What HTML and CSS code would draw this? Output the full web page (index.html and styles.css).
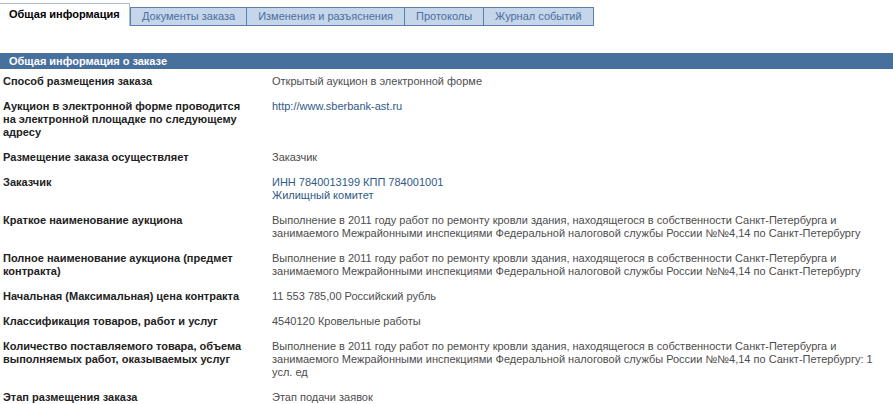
FILE: index.html
```html
<!DOCTYPE html>
<html lang="ru">
<head>
<meta charset="utf-8">
<title>Общая информация</title>
<link rel="stylesheet" href="styles.css">
</head>
<body>
<div class="tabs">
  <div class="tab tab-active">Общая информация</div>
  <div class="tab">Документы заказа</div>
  <div class="tab">Изменения и разъяснения</div>
  <div class="tab">Протоколы</div>
  <div class="tab">Журнал событий</div>
</div>

<div class="section-title">Общая информация о заказе</div>

<div class="info">
  <div class="row">
    <div class="label">Способ размещения заказа</div>
    <div class="value">Открытый аукцион в электронной форме</div>
  </div>
  <div class="row">
    <div class="label">Аукцион в электронной форме проводится на электронной площадке по следующему адресу</div>
    <div class="value"><a class="link" href="#">http://www.sberbank-ast.ru</a></div>
  </div>
  <div class="row">
    <div class="label">Размещение заказа осуществляет</div>
    <div class="value">Заказчик</div>
  </div>
  <div class="row">
    <div class="label">Заказчик</div>
    <div class="value"><a class="link" href="#">ИНН 7840013199 КПП 784001001<br>Жилищный комитет</a></div>
  </div>
  <div class="row">
    <div class="label">Краткое наименование аукциона</div>
    <div class="value">Выполнение в 2011 году работ по ремонту кровли здания, находящегося в собственности Санкт-Петербурга и занимаемого Межрайонными инспекциями Федеральной налоговой службы России №№4,14 по Санкт-Петербургу</div>
  </div>
  <div class="row">
    <div class="label">Полное наименование аукциона (предмет контракта)</div>
    <div class="value">Выполнение в 2011 году работ по ремонту кровли здания, находящегося в собственности Санкт-Петербурга и занимаемого Межрайонными инспекциями Федеральной налоговой службы России №№4,14 по Санкт-Петербургу</div>
  </div>
  <div class="row">
    <div class="label">Начальная (Максимальная) цена контракта</div>
    <div class="value">11 553 785,00 Российский рубль</div>
  </div>
  <div class="row">
    <div class="label">Классификация товаров, работ и услуг</div>
    <div class="value">4540120 Кровельные работы</div>
  </div>
  <div class="row">
    <div class="label">Количество поставляемого товара, объема выполняемых работ, оказываемых услуг</div>
    <div class="value">Выполнение в 2011 году работ по ремонту кровли здания, находящегося в собственности Санкт-Петербурга и занимаемого Межрайонными инспекциями Федеральной налоговой службы России №№4,14 по Санкт-Петербургу: 1 усл. ед</div>
  </div>
  <div class="row">
    <div class="label">Этап размещения заказа</div>
    <div class="value">Этап подачи заявок</div>
  </div>
</div>
</body>
</html>
```

FILE: styles.css
```css
html, body {
  margin: 0;
  padding: 0;
  background: #ffffff;
}

body {
  font-family: "Liberation Sans", Arial, sans-serif;
  font-size: 11px;
  color: #4d4d4d;
}

.tabs {
  display: flex;
  align-items: flex-end;
  padding-top: 3px;
  height: 23px;
}

.tab {
  box-sizing: border-box;
  height: 19px;
  line-height: 17px;
  padding: 0 11px;
  background: #c6d6ea;
  border: 1px solid #5b7fae;
  border-left-width: 0;
  color: #4b6d9d;
  white-space: nowrap;
}

.tab-active {
  height: 23px;
  line-height: 21px;
  width: 130px;
  padding: 0 0 0 9px;
  background: #ffffff;
  border: 1px solid #a9bcd0;
  border-left: 0;
  border-bottom: 0;
  color: #000000;
  font-weight: bold;
}

.tab-active + .tab {
  border-left-width: 1px;
}

.section-title {
  margin-top: 27px;
  height: 16px;
  line-height: 16px;
  padding-left: 9px;
  background: #48709c;
  color: #ffffff;
  font-weight: bold;
}

.row {
  display: grid;
  grid-template-columns: 272px 1fr;
}

.label,
.value {
  padding: 6px 0;
  line-height: 13px;
}

.label {
  padding-left: 3px;
  padding-right: 18px;
  font-weight: bold;
  color: #222222;
}

.value {
  padding-right: 6px;
}

.link {
  color: #2f5a86;
  text-decoration: none;
}
```
